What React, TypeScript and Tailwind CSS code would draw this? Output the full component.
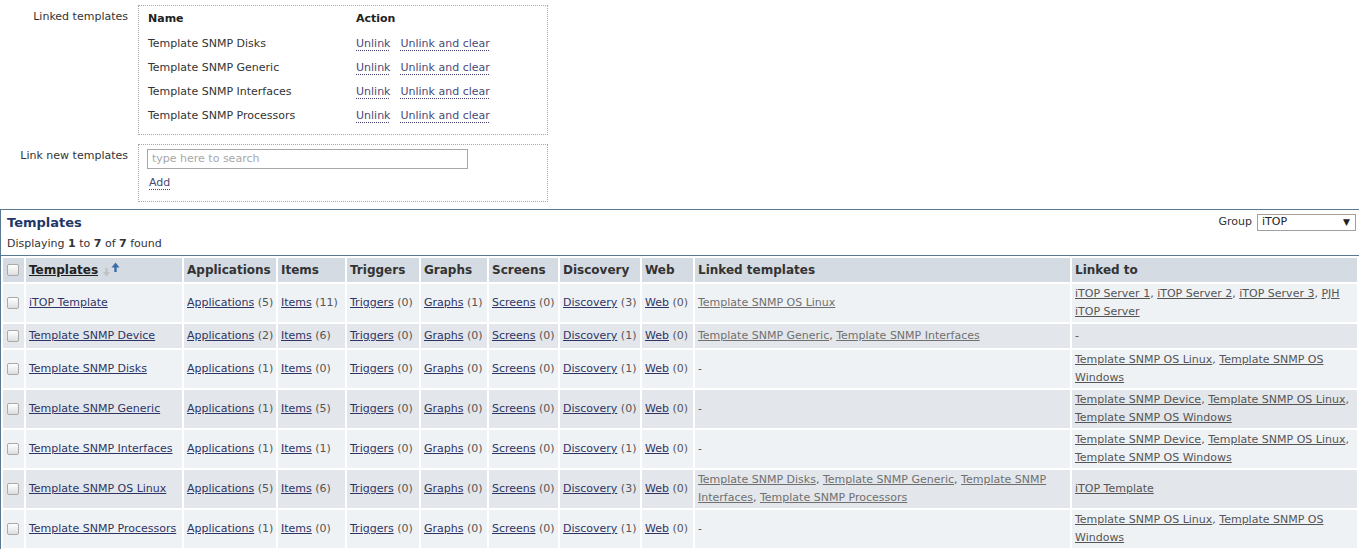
import React from "react";

type Row = {
  name: string;
  apps: number;
  items: number;
  triggers: number;
  graphs: number;
  screens: number;
  discovery: number;
  web: number;
  linked: string[];
  linkedTo: string[];
};

const rows: Row[] = [
  {
    name: "iTOP Template",
    apps: 5, items: 11, triggers: 0, graphs: 1, screens: 0, discovery: 3, web: 0,
    linked: ["Template SNMP OS Linux"],
    linkedTo: ["iTOP Server 1", "iTOP Server 2", "iTOP Server 3", "PJH iTOP Server"],
  },
  {
    name: "Template SNMP Device",
    apps: 2, items: 6, triggers: 0, graphs: 0, screens: 0, discovery: 1, web: 0,
    linked: ["Template SNMP Generic", "Template SNMP Interfaces"],
    linkedTo: [],
  },
  {
    name: "Template SNMP Disks",
    apps: 1, items: 0, triggers: 0, graphs: 0, screens: 0, discovery: 1, web: 0,
    linked: [],
    linkedTo: ["Template SNMP OS Linux", "Template SNMP OS Windows"],
  },
  {
    name: "Template SNMP Generic",
    apps: 1, items: 5, triggers: 0, graphs: 0, screens: 0, discovery: 0, web: 0,
    linked: [],
    linkedTo: ["Template SNMP Device", "Template SNMP OS Linux", "Template SNMP OS Windows"],
  },
  {
    name: "Template SNMP Interfaces",
    apps: 1, items: 1, triggers: 0, graphs: 0, screens: 0, discovery: 1, web: 0,
    linked: [],
    linkedTo: ["Template SNMP Device", "Template SNMP OS Linux", "Template SNMP OS Windows"],
  },
  {
    name: "Template SNMP OS Linux",
    apps: 5, items: 6, triggers: 0, graphs: 0, screens: 0, discovery: 3, web: 0,
    linked: [
      "Template SNMP Disks",
      "Template SNMP Generic",
      "Template SNMP Interfaces",
      "Template SNMP Processors",
    ],
    linkedTo: ["iTOP Template"],
  },
  {
    name: "Template SNMP Processors",
    apps: 1, items: 0, triggers: 0, graphs: 0, screens: 0, discovery: 1, web: 0,
    linked: [],
    linkedTo: ["Template SNMP OS Linux", "Template SNMP OS Windows"],
  },
];

const linkedTemplates = [
  "Template SNMP Disks",
  "Template SNMP Generic",
  "Template SNMP Interfaces",
  "Template SNMP Processors",
];

function Checkbox() {
  return (
    <span className="block w-[12px] h-[12px] ml-[4px] border border-[#a9a9a9] rounded-[2px] bg-gradient-to-b from-white to-[#dedede]" />
  );
}

function Counted({ label, n }: { label: string; n: number }) {
  return (
    <span className="whitespace-nowrap">
      <a className="text-[#2d3566] underline">{label}</a>
      <span className="text-[#555]"> ({n})</span>
    </span>
  );
}

function LinkList({ names, color }: { names: string[]; color: string }) {
  if (names.length === 0) return <span className="text-[#555]">-</span>;
  return (
    <>
      {names.map((n, i) => (
        <React.Fragment key={n}>
          <a className={`${color} underline`}>{n}</a>
          {i < names.length - 1 ? <span className="text-[#555]">, </span> : null}
        </React.Fragment>
      ))}
    </>
  );
}

function SortArrows() {
  return (
    <svg width="18" height="15" viewBox="0 0 18 15" className="inline-block align-top ml-[5px] mt-[1px]">
      <path d="M3.5 6v5" stroke="#c2c2c2" strokeWidth="2.4" />
      <path d="M0 10h7l-3.5 4.5z" fill="#c2c2c2" />
      <path d="M12.5 4v6" stroke="#3b6ea8" strokeWidth="2.4" />
      <path d="M8.5 5.5h8l-4-5z" fill="#3b6ea8" />
    </svg>
  );
}

const headers = [
  "Applications",
  "Items",
  "Triggers",
  "Graphs",
  "Screens",
  "Discovery",
  "Web",
  "Linked templates",
  "Linked to",
];

export default function App() {
  return (
    <div className="w-[1359px] h-[549px] overflow-hidden bg-white text-[11px] text-[#333] font-['DejaVu_Sans',Verdana,sans-serif]">
      {/* linked templates form */}
      <div className="pt-[5px] flex flex-col gap-[9px]">
        <div className="flex">
          <div className="w-[128px] text-right pt-[4px]">Linked templates</div>
          <div className="ml-[10px] w-[410px] h-[130px] border border-dotted border-[#a8a8a8] px-[9px] pt-[1px]">
            <table className="border-collapse">
              <tbody>
                <tr className="h-[25px]">
                  <td className="w-[208px] font-bold text-[#222] align-middle">Name</td>
                  <td className="font-bold text-[#222] align-middle">Action</td>
                </tr>
                {linkedTemplates.map((t) => (
                  <tr key={t} className="h-[24px]">
                    <td className="align-middle">{t}</td>
                    <td className="align-middle whitespace-nowrap">
                      <a className="text-[#4a4a78] underline decoration-dotted underline-offset-[3px]">Unlink</a>
                      <a className="ml-[10px] text-[#4a4a78] underline decoration-dotted underline-offset-[3px]">
                        Unlink and clear
                      </a>
                    </td>
                  </tr>
                ))}
              </tbody>
            </table>
          </div>
        </div>
        <div className="flex">
          <div className="w-[128px] text-right pt-[4px]">Link new templates</div>
          <div className="ml-[10px] w-[410px] h-[58px] border border-dotted border-[#a8a8a8] pl-[8px] pt-[4px]">
            <div className="w-[321px] h-[20px] border border-[#a8a8a8] px-[4px] leading-[18px] text-[#a8a8a8]">
              type here to search
            </div>
            <a className="inline-block mt-[6px] ml-[2px] text-[#4a4a78] underline decoration-dotted underline-offset-[3px]">
              Add
            </a>
          </div>
        </div>
      </div>

      {/* templates panel */}
      <div className="mt-[7px] border-t border-l border-[#5a7990]">
        <div className="border-b border-[#5a7990]">
          <div className="h-[25px] flex items-center justify-between pl-[6px] pr-[3px]">
            <div className="text-[13px] font-bold text-[#1f3868]">Templates</div>
            <div className="flex items-center">
              <span className="mr-[5px]">Group</span>
              <div className="w-[99px] h-[17px] border border-[#a0a0a0] flex items-center justify-between pl-[4px] pr-[5px] text-[#222]">
                <span>iTOP</span>
                <span className="text-[9px]">▼</span>
              </div>
            </div>
          </div>
          <div className="h-[20px] leading-[18px] pl-[6px]">
            Displaying <b>1</b> to <b>7</b> of <b>7</b> found
          </div>
        </div>
        <table className="table-fixed border-separate border-spacing-[2px] w-[1358px] leading-[18px]">
          <colgroup>
            <col className="w-[21px]" />
            <col className="w-[156px]" />
            <col className="w-[92px]" />
            <col className="w-[67px]" />
            <col className="w-[72px]" />
            <col className="w-[66px]" />
            <col className="w-[69px]" />
            <col className="w-[80px]" />
            <col className="w-[51px]" />
            <col className="w-[375px]" />
            <col />
          </colgroup>
          <thead>
            <tr className="bg-[#d4dbe2]">
              <td className="h-[24px] p-0 align-middle">
                <Checkbox />
              </td>
              <td className="h-[24px] px-[3px] align-middle font-bold text-[12px] text-[#222]">
                <a className="underline">Templates</a>
                <SortArrows />
              </td>
              {headers.map((h) => (
                <td key={h} className="h-[24px] px-[3px] align-middle font-bold text-[12px] text-[#333] whitespace-nowrap">
                  {h}
                </td>
              ))}
            </tr>
          </thead>
          <tbody>
            {rows.map((r, i) => (
              <tr key={r.name} className={i % 2 === 0 ? "bg-[#eff2f5]" : "bg-[#e3e7eb]"}>
                <td className="h-[24px] p-0 align-middle">
                  <Checkbox />
                </td>
                <td className="h-[24px] px-[3px] py-px align-middle whitespace-nowrap">
                  <a className="text-[#2d3566] underline">{r.name}</a>
                </td>
                <td className="px-[3px] py-px align-middle"><Counted label="Applications" n={r.apps} /></td>
                <td className="px-[3px] py-px align-middle"><Counted label="Items" n={r.items} /></td>
                <td className="px-[3px] py-px align-middle"><Counted label="Triggers" n={r.triggers} /></td>
                <td className="px-[3px] py-px align-middle"><Counted label="Graphs" n={r.graphs} /></td>
                <td className="px-[3px] py-px align-middle"><Counted label="Screens" n={r.screens} /></td>
                <td className="px-[3px] py-px align-middle"><Counted label="Discovery" n={r.discovery} /></td>
                <td className="px-[3px] py-px align-middle"><Counted label="Web" n={r.web} /></td>
                <td className="px-[3px] py-px align-middle">
                  <LinkList names={r.linked} color="text-[#707070]" />
                </td>
                <td className="px-[3px] py-px align-middle">
                  <LinkList names={r.linkedTo} color="text-[#555]" />
                </td>
              </tr>
            ))}
          </tbody>
        </table>
      </div>
    </div>
  );
}
